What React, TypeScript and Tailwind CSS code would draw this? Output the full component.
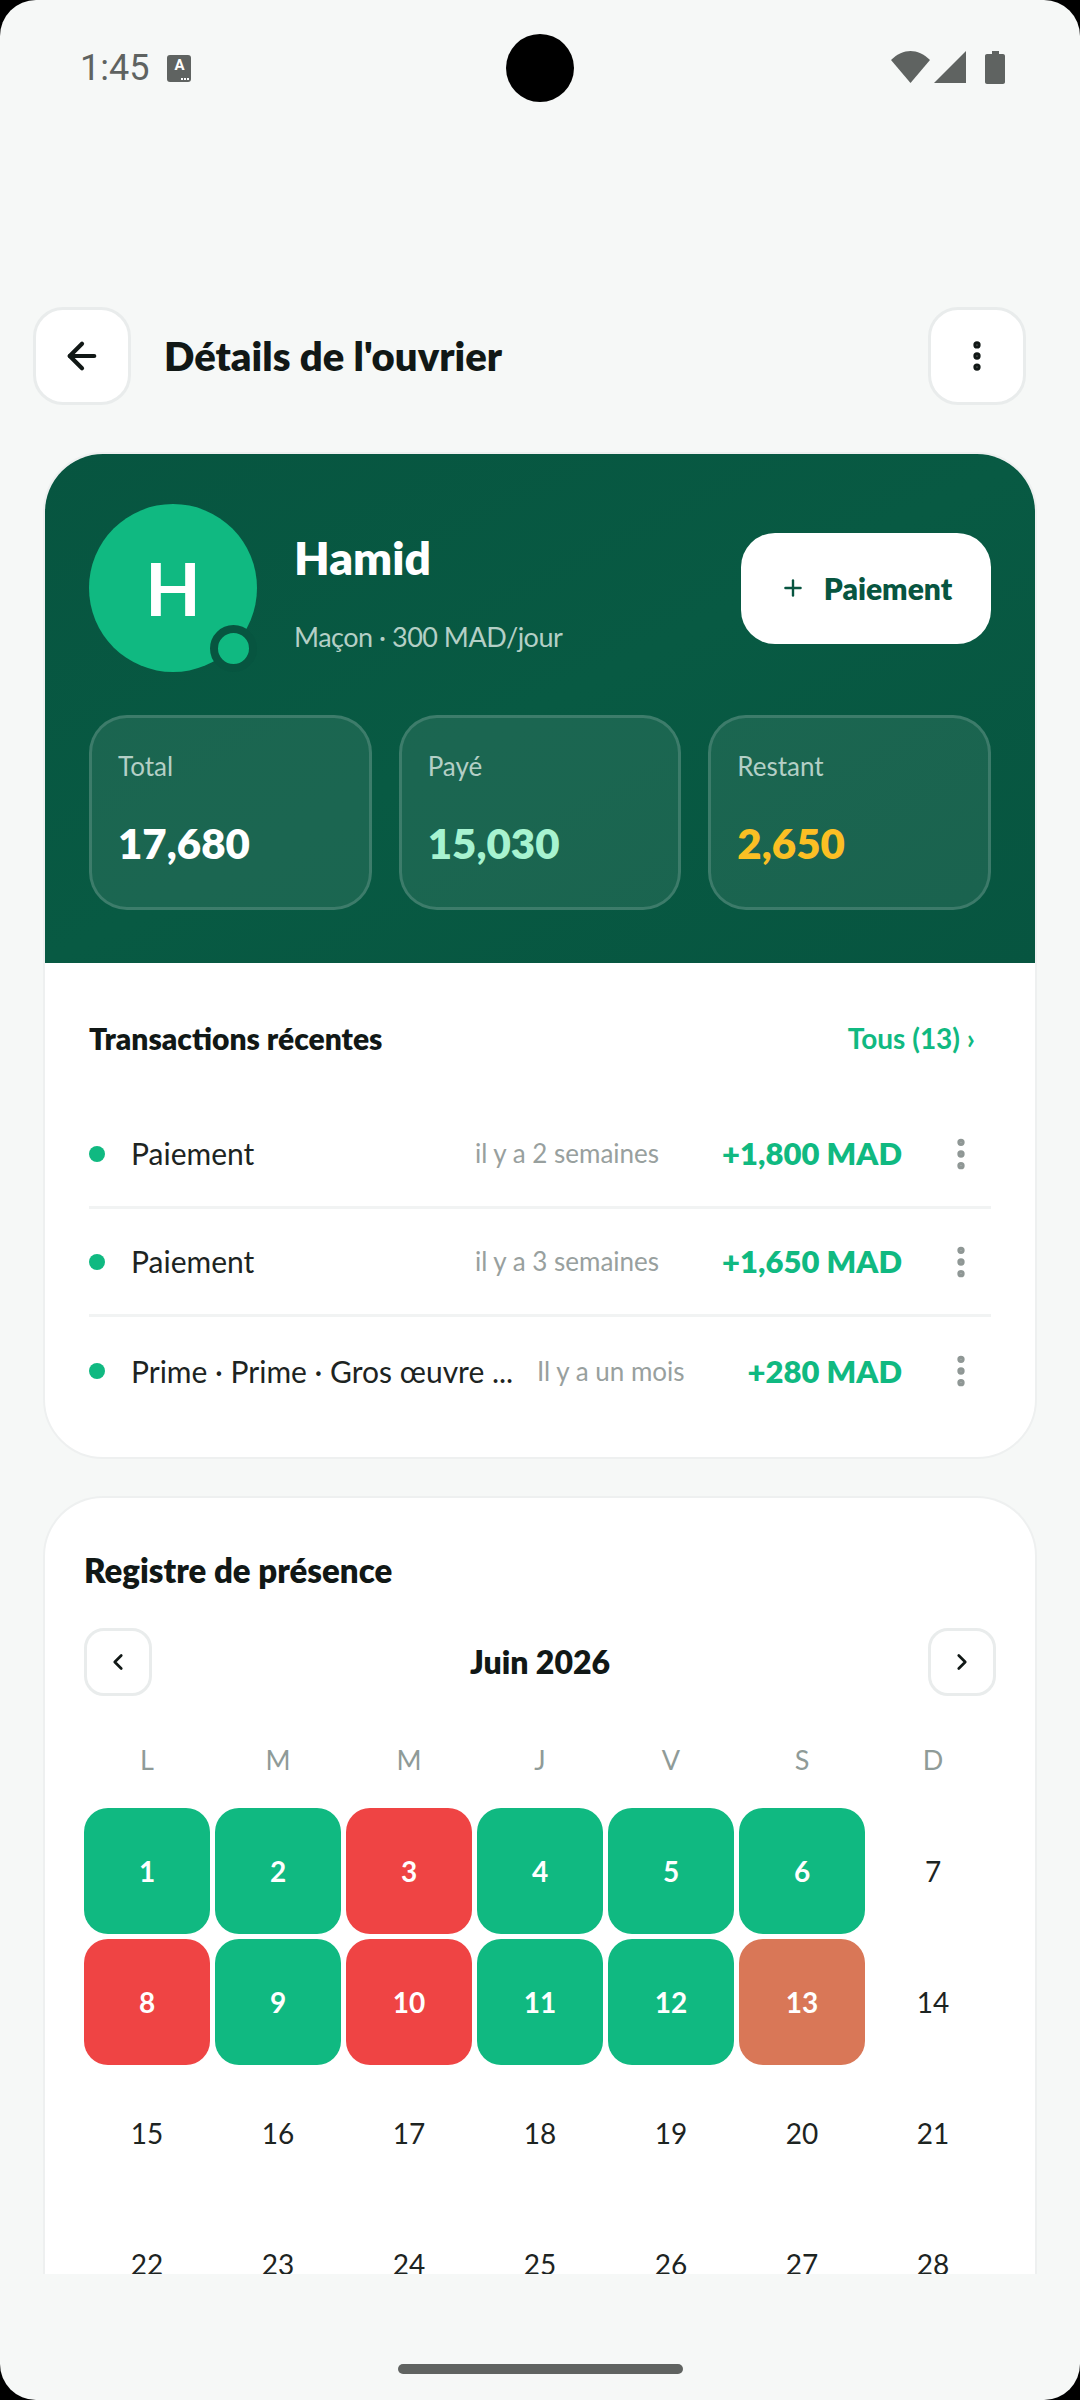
import { ArrowLeft, ChevronLeft, ChevronRight, EllipsisVertical, Plus } from "lucide-react";

const stats = [
  { label: "Total", value: "17,680", color: "text-white" },
  { label: "Payé", value: "15,030", color: "text-[#a7f3d0]" },
  { label: "Restant", value: "2,650", color: "text-[#fbbf24]" },
];

const transactions = [
  { label: "Paiement", time: "il y a 2 semaines", amount: "+1,800 MAD" },
  { label: "Paiement", time: "il y a 3 semaines", amount: "+1,650 MAD" },
  { label: "Prime · Prime · Gros œuvre ...", time: "Il y a un mois", amount: "+280 MAD" },
];

const weekdays = ["L", "M", "M", "J", "V", "S", "D"];

const dayColors: Record<number, string> = {
  1: "bg-[#10b981]",
  2: "bg-[#10b981]",
  3: "bg-[#ef4444]",
  4: "bg-[#10b981]",
  5: "bg-[#10b981]",
  6: "bg-[#10b981]",
  8: "bg-[#ef4444]",
  9: "bg-[#10b981]",
  10: "bg-[#ef4444]",
  11: "bg-[#10b981]",
  12: "bg-[#10b981]",
  13: "bg-[#d97757]",
};

function StatusBar() {
  return (
    <div className="relative flex h-[136px] shrink-0 items-start justify-between pl-[80px] pr-[75px] pt-[49px]">
      <div className="flex items-center gap-[18px]">
        <span className="font-['Roboto',sans-serif] text-[36px] leading-[38px] text-[#5f6361]">1:45</span>
        <span className="relative flex h-[27px] w-[24px] items-start justify-center rounded-[3px] bg-[#5f6361] font-['Roboto',sans-serif] text-[15px] font-bold leading-[20px] text-white">
          A
          <span className="absolute bottom-[2px] right-[2px] flex gap-[1px]">
            <span className="h-[2px] w-[2px] bg-white" />
            <span className="h-[2px] w-[2px] bg-white" />
            <span className="h-[2px] w-[2px] bg-white" />
          </span>
        </span>
      </div>
      <div className="absolute left-[506px] top-[34px] h-[68px] w-[68px] rounded-full bg-black" />
      <svg width="114" height="34" viewBox="0 0 114 34" className="mt-[2px] fill-[#5f6361]">
        <path d="M0 9C6 3 13 0 19.500 0S33 3 39 9L19.500 32Z" />
        <path d="M75 0V32H43Z" />
        <path d="M101 0H108V3H112C113.100 3 114 3.900 114 5V31C114 32.100 113.100 33 112 33H96C94.900 33 94 32.100 94 31V5C94 3.900 94.900 3 96 3H101Z" />
      </svg>
    </div>
  );
}

function Hero() {
  return (
    <div className="bg-gradient-to-br from-[#075540] via-[#085a43] to-[#075540] px-[44px] pb-[53px] pt-[50px]">
      <div className="flex items-center">
        <div className="relative flex h-[168px] w-[168px] shrink-0 items-center justify-center rounded-full bg-[#10b981] text-[72px] font-bold text-white">
          H
          <span className="absolute bottom-0 right-0 h-[47px] w-[47px] rounded-full border-[8px] border-[#075540] bg-[#10b981]" />
        </div>
        <div className="ml-[37px] flex-1 pt-[9px]">
          <div className="text-[46px] font-extrabold leading-[56px] text-white">Hamid</div>
          <div className="mt-[33px] text-[27px] leading-[36px] tracking-[-0.5px] text-[#b4cfc6]">Maçon · 300 MAD/jour</div>
        </div>
        <button className="flex h-[111px] w-[250px] items-center justify-center gap-[18px] rounded-[34px] bg-white text-[30px] font-extrabold text-[#075540]">
          <Plus size={26} strokeWidth={2.2} />
          Paiement
        </button>
      </div>
      <div className="mt-[43px] grid grid-cols-3 gap-[27px]">
        {stats.map((s) => (
          <div key={s.label} className="h-[195px] rounded-[38px] border-[3px] border-white/15 bg-white/[0.08] px-[26px] pt-[31px]">
            <div className="text-[26px] leading-[34px] text-[#b4cfc6]">{s.label}</div>
            <div className={`mt-[32px] text-[42px] font-extrabold leading-[56px] ${s.color}`}>{s.value}</div>
          </div>
        ))}
      </div>
    </div>
  );
}

function Transactions() {
  return (
    <div className="px-[44px] pb-[32px] pt-[55px]">
      <div className="flex items-center justify-between pr-[16px]">
        <h2 className="text-[30px] font-extrabold leading-[40px] text-[#111816]">Transactions récentes</h2>
        <span className="text-[28px] font-bold leading-[40px] text-[#10b981]">Tous (13) ›</span>
      </div>
      <ul className="mt-[43px]">
        {transactions.map((t, i) => (
          <li key={i} className={`flex h-[108px] items-center ${i < 2 ? "border-b-[3px] border-[#f1f3f3]" : ""}`}>
            <span className="h-[16px] w-[16px] shrink-0 rounded-full bg-[#10b981]" />
            <span className="ml-[26px] min-w-0 flex-1 whitespace-nowrap text-[30px] text-[#1d2422]">{t.label}</span>
            <span className="text-[26px] text-[#98a09e]">{t.time}</span>
            <span className="ml-[63px] text-[31px] font-extrabold text-[#10b981]">{t.amount}</span>
            <span className="ml-[39px] mr-[10px] text-[#8f9795]">
              <EllipsisVertical size={40} strokeWidth={2.4} />
            </span>
          </li>
        ))}
      </ul>
    </div>
  );
}

function Calendar() {
  const days = Array.from({ length: 28 }, (_, i) => i + 1);
  return (
    <div className="mt-[37px] rounded-t-[60px] border-[2px] border-b-0 border-[#eef0f0] bg-white px-[39px] pb-[40px] pt-[50px]">
      <h2 className="text-[33px] font-extrabold leading-[44px] text-[#111816]">Registre de présence</h2>
      <div className="mt-[36px] flex items-center justify-between">
        <button className="flex h-[68px] w-[68px] items-center justify-center rounded-[20px] border-[3px] border-[#e9ecec] text-[#111816]">
          <ChevronLeft size={26} strokeWidth={2.5} />
        </button>
        <span className="text-[32px] font-extrabold text-[#111816]">Juin 2026</span>
        <button className="flex h-[68px] w-[68px] items-center justify-center rounded-[20px] border-[3px] border-[#e9ecec] text-[#111816]">
          <ChevronRight size={26} strokeWidth={2.5} />
        </button>
      </div>
      <div className="mt-[44px] grid grid-cols-7 gap-x-[5px]">
        {weekdays.map((d, i) => (
          <div key={i} className="text-center text-[27px] leading-[40px] text-[#8f9b98]">{d}</div>
        ))}
      </div>
      <div className="mt-[28px] grid grid-cols-7 gap-[5px]">
        {days.map((d) => (
          <div
            key={d}
            className={`flex h-[126px] items-center justify-center rounded-[24px] text-[28px] ${
              dayColors[d] ? `${dayColors[d]} font-bold text-white` : "text-[#1d2422]"
            }`}
          >
            {d}
          </div>
        ))}
      </div>
    </div>
  );
}

export default function App() {
  return (
    <div className="h-[2400px] w-[1080px] bg-black font-['Lato',sans-serif]">
      <div className="flex h-full w-full flex-col overflow-hidden rounded-[36px] bg-[#f6f8f7]">
        <StatusBar />
        <div className="flex h-[316px] shrink-0 items-center justify-between pl-[33px] pr-[54px] pt-[124px] pb-[0px]">
          <div className="flex items-center">
            <button className="flex h-[98px] w-[98px] items-center justify-center rounded-[30px] border-[3px] border-[#e9ecec] bg-white text-[#111816]">
              <ArrowLeft size={42} strokeWidth={2.4} />
            </button>
            <h1 className="ml-[33px] text-[40px] font-extrabold text-[#111816]">Détails de l'ouvrier</h1>
          </div>
          <button className="flex h-[98px] w-[98px] items-center justify-center rounded-[30px] border-[3px] border-[#e9ecec] bg-white text-[#111816]">
            <EllipsisVertical size={38} strokeWidth={2.6} />
          </button>
        </div>
        <div className="h-[1822px] shrink-0 overflow-hidden px-[43px] pt-[0px]">
          <div className="overflow-hidden rounded-[60px] border-[2px] border-[#eef0f0] bg-white">
            <Hero />
            <Transactions />
          </div>
          <Calendar />
        </div>
        <div className="flex flex-1 items-start justify-center pt-[90px]">
          <div className="h-[10px] w-[285px] rounded-full bg-[#606361]" />
        </div>
      </div>
    </div>
  );
}
